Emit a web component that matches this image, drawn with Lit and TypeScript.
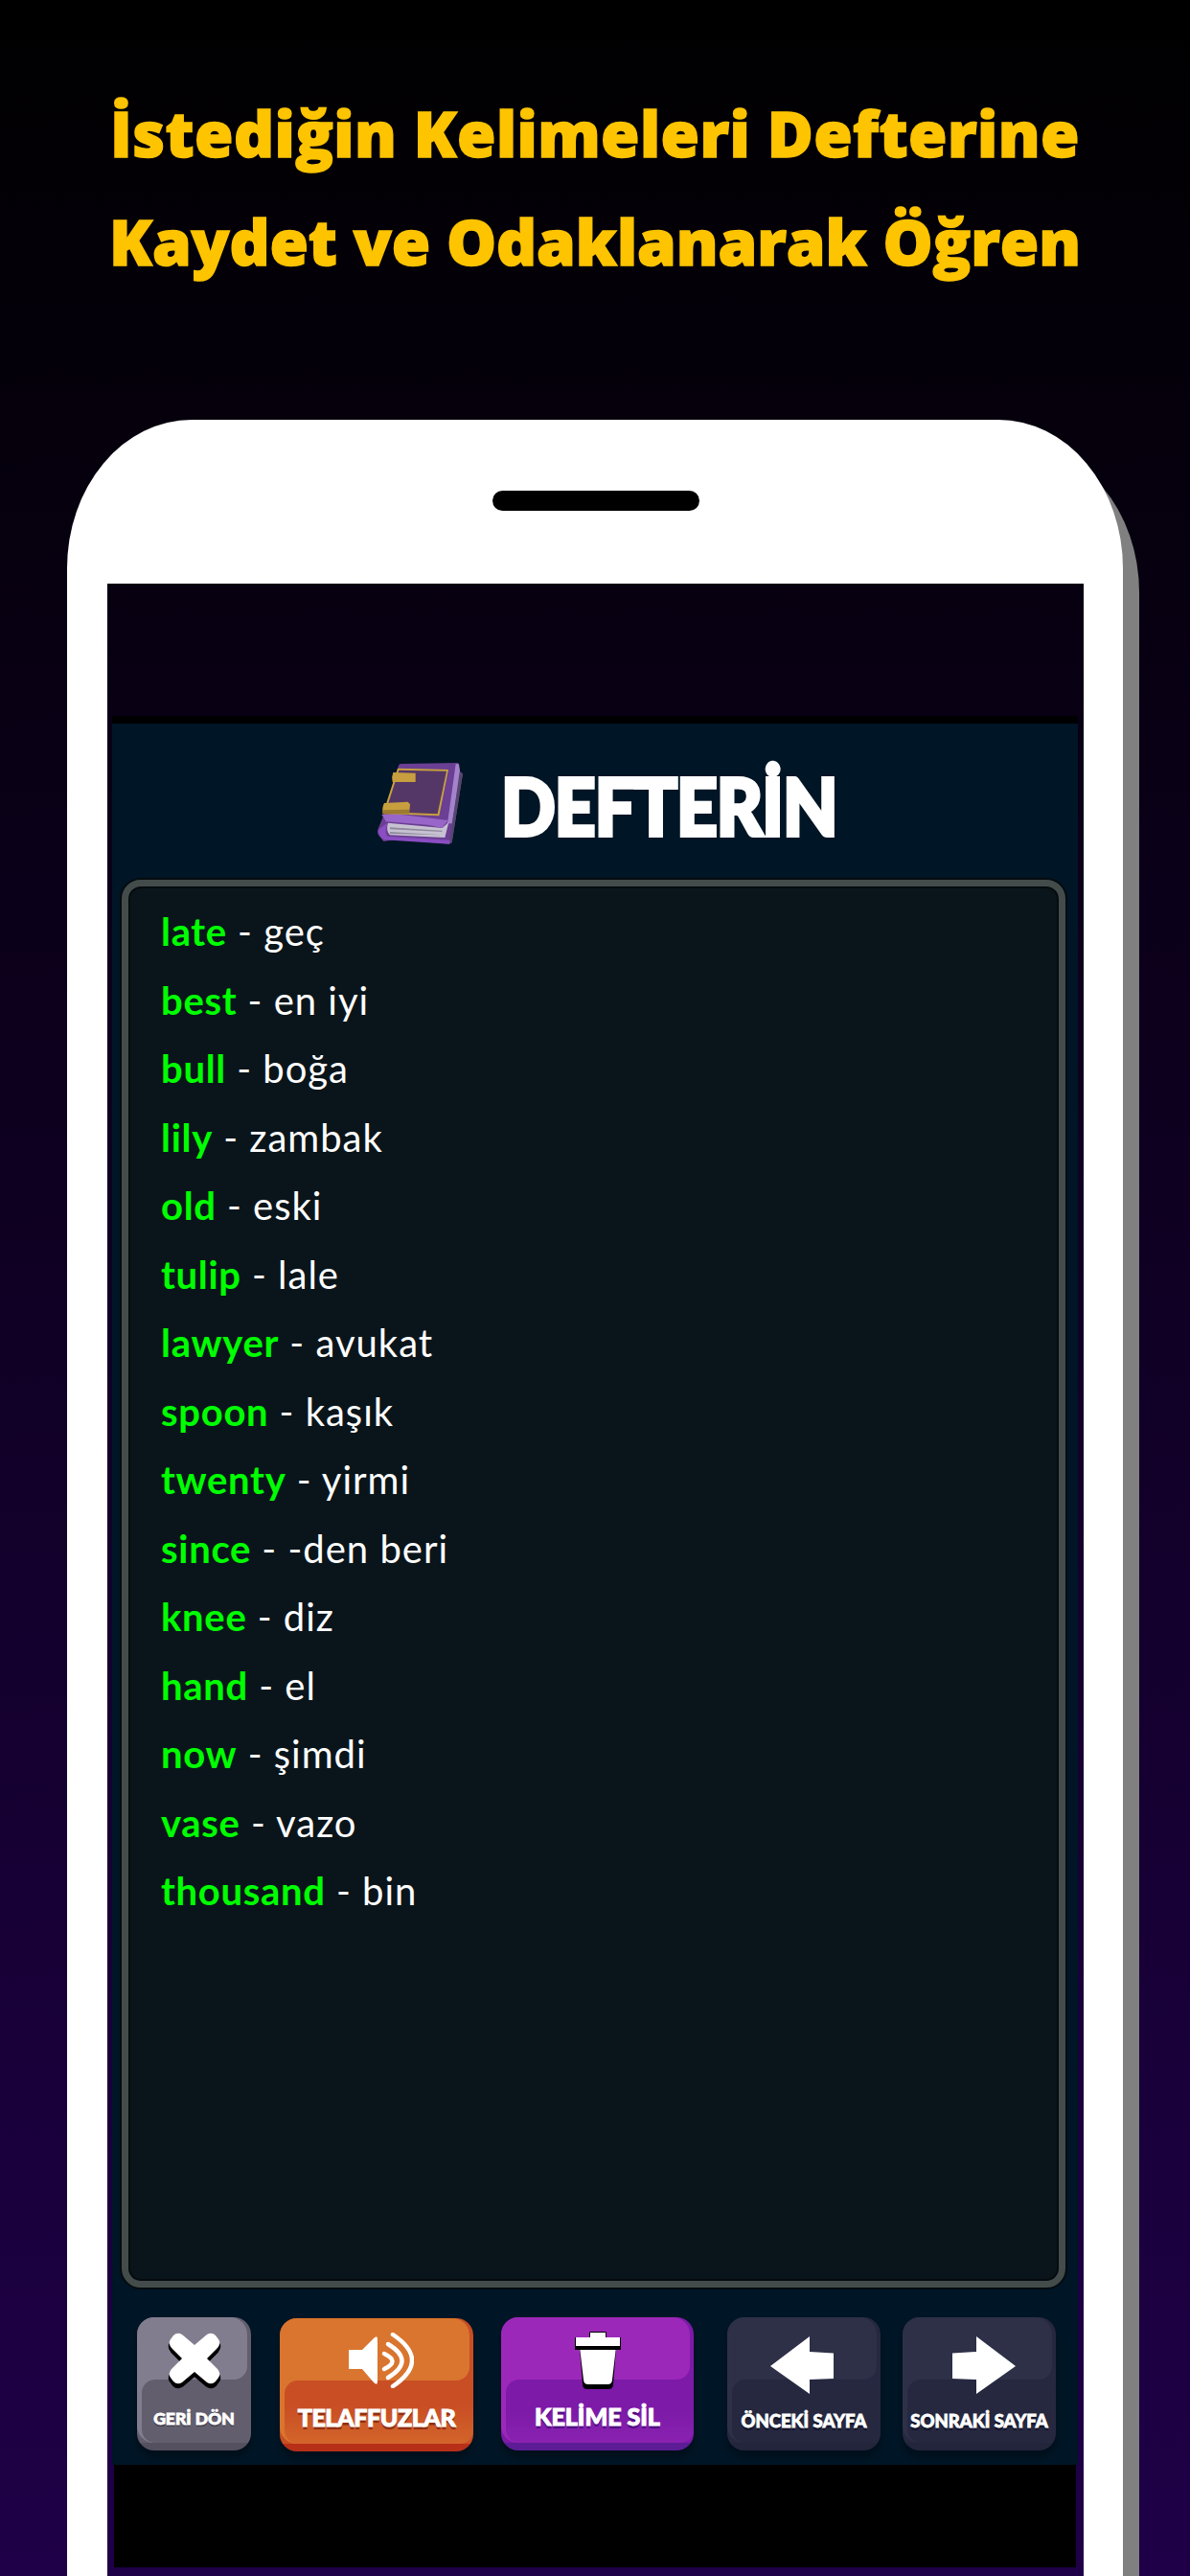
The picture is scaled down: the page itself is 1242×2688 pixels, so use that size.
import { LitElement, html, css, svg } from "lit";
import { customElement } from "lit/decorators.js";

const WORDS: [string, string][] = [
  ["late", "geç"], ["best", "en iyi"], ["bull", "boğa"], ["lily", "zambak"], ["old", "eski"],
  ["tulip", "lale"], ["lawyer", "avukat"], ["spoon", "kaşık"], ["twenty", "yirmi"], ["since", "-den beri"],
  ["knee", "diz"], ["hand", "el"], ["now", "şimdi"], ["vase", "vazo"], ["thousand", "bin"],
];

const bookIcon = svg`<svg class="book" viewBox="0 0 270 255" width="90" height="85">
  <path d="M70 6 Q72 3 80 3 L256 0 L260 28 L270 34 L236 250 L228 254 L60 240 L22 246 L6 226 Q0 215 6 204 L20 170 Z" fill="#6b3f93"/>
  <path d="M248 4 L258 4 L262 32 L236 190 L222 190 Z" fill="#a583cc"/>
  <path d="M260 28 L270 34 L236 250 L228 250 L240 170 Z" fill="#56466e"/>
  <path d="M36 188 L206 204 L226 186 L214 234 L42 226 Q28 210 36 188 Z" fill="#c7c2d2"/>
  <path d="M42 202 L205 212 L205 216 L42 208 Z M42 216 L206 226 L42 222 Z" fill="#8f8a9d"/>
  <path d="M30 184 L160 194 L205 204 L224 180 L60 160 L16 162 Z" fill="#9866c8"/>
  <path d="M8 208 Q0 226 24 241 L228 254 L230 242 L34 230 Q24 220 34 188 Z" fill="#8a4dc2"/>
  <path d="M66 17 L225 21 L196 166 L20 159 Z" fill="#c9a33e"/>
  <path d="M70 23 L219 26 L191 160 L28 154 Z" fill="#553767"/>
  <path d="M52 30 L122 32 L122 60 L50 60 Q46 44 52 30 Z" fill="#c79f3e"/>
  <path d="M24 126 L98 122 L105 130 L102 160 L20 160 Q16 140 24 126 Z" fill="#c79f3e"/>
  <path d="M22 148 L102 146 L102 160 L18 160 Z" fill="#9c7a2e"/>
</svg>`;

const crossIcon = svg`<svg viewBox="0 0 56 60" width="56" height="60">
  <path d="M15 3 L28 14 L41 3 Q46 0 50 4 L53 8 Q56 12 52 17 L41 28 L52 39 Q56 44 53 48 L50 52 Q46 56 41 53 L28 42 L15 53 Q10 56 6 52 L3 48 Q0 44 4 39 L15 28 L4 17 Q0 12 3 8 L6 4 Q10 0 15 3 Z" transform="translate(0 4)" fill="#000" stroke="#000" stroke-width="2"/>
  <path d="M15 3 L28 14 L41 3 Q46 0 50 4 L53 8 Q56 12 52 17 L41 28 L52 39 Q56 44 53 48 L50 52 Q46 56 41 53 L28 42 L15 53 Q10 56 6 52 L3 48 Q0 44 4 39 L15 28 L4 17 Q0 12 3 8 L6 4 Q10 0 15 3 Z" fill="#fff"/>
</svg>`;

const speakerIcon = svg`<svg viewBox="0 0 68 58" width="68" height="58">
  <path d="M0 18 L14 18 L26 6 Q30 2 30 7 L30 51 Q30 56 26 52 L14 38 L0 38 Z" fill="#fff"/>
  <g fill="none" stroke="#fff" stroke-width="4.5" stroke-linecap="round">
    <path d="M37 22 Q54 30 37 38"/>
    <path d="M41 12 Q70 29.5 41 47"/>
    <path d="M46 2 Q86 29 46 56"/>
  </g>
</svg>`;

const trashIcon = svg`<svg viewBox="0 0 48 60" width="48" height="60">
  <path d="M5 18 L43 18 L40 55 Q40 60 35 60 L13 60 Q8 60 8 55 Z" fill="#000"/>
  <path d="M5 16 L43 16 L39 50 Q39 55 34 55 L14 55 Q9 55 9 50 Z" fill="#fff"/>
  <path d="M0 6 L15 6 L15 1 Q15 0 17 0 L31 0 Q33 0 33 1 L33 6 L48 6 L48 19 L0 19 Z" fill="#000"/>
  <path d="M1 6 L16 6 L16 1 L32 1 L32 6 L47 6 L47 15 L1 15 Z" fill="#fff"/>
</svg>`;

const arrowIcon = (right: boolean) => svg`<svg viewBox="0 0 66 60" width="66" height="60">
  <path d="${right ? "M0 17.5 L25 16 L25 0 L66 31 L25 60 L25 45 L0 44 Z" : "M66 17.5 L41 16 L41 0 L0 31 L41 60 L41 45 L66 44 Z"}" fill="#fff"/>
</svg>`;

@customElement("app-root")
export class AppRoot extends LitElement {
  static styles = css`
    :host {
      display: flex;
      flex-direction: column;
      width: 1242px;
      height: 2688px;
      overflow: hidden;
      background: linear-gradient(180deg, #000 0%, #1f0048 100%);
      font-family: "Lato", "Noto Sans", sans-serif;
    }
    .headline {
      height: 438px;
      flex: none;
      box-sizing: border-box;
      padding-top: 82px;
      text-align: center;
      color: #ffc400;
      font-family: "Open Sans", "Noto Sans", sans-serif;
      font-weight: 800;
      font-size: 65.5px;
      line-height: 113px;
      letter-spacing: 0.4px;
      -webkit-text-stroke: 1.5px #ffc400;
    }
    .headline div { white-space: nowrap; }
    .headline .second { letter-spacing: -0.1px; }
    .phone {
      flex: 1;
      margin-left: 70px;
      width: 1102px;
      box-sizing: border-box;
      padding: 0 41px 0 42px;
      background: #fff;
      border-radius: 130px 130px 0 0 / 155px 155px 0 0;
      box-shadow: 17px 25px 0 #808080;
      display: flex;
      flex-direction: column;
      min-height: 0;
    }
    .notch-area {
      height: 171px;
      flex: none;
      display: flex;
      justify-content: center;
      padding-top: 74px;
      box-sizing: border-box;
    }
    .notch {
      width: 216px;
      height: 21px;
      border-radius: 11px;
      background: #000;
    }
    .screen {
      flex: 1;
      display: flex;
      flex-direction: column;
      background: linear-gradient(180deg, #000 0%, #1f0048 100%) 0 -609px / 100% 2688px no-repeat;
      padding: 138px 6px 9px 5px;
      min-height: 0;
    }
    .panel {
      height: 1825px;
      flex: none;
      box-sizing: border-box;
      background: #001525;
      border-top: 8px solid #000;
      display: flex;
      flex-direction: column;
    }
    .title {
      height: 163px;
      flex: none;
      display: flex;
      align-items: center;
      box-sizing: border-box;
      padding-left: 276px;
      gap: 40px;
    }
    .book { flex: none; margin-top: 4px; }
    .title-text {
      color: #fff;
      font-family: "Lato", sans-serif;
      font-weight: 900;
      font-size: 81px;
      line-height: 1;
      letter-spacing: -1px;
      -webkit-text-stroke: 4px #fff;
      transform: translateY(4px) scaleX(0.92);
      transform-origin: left center;
    }
    .box {
      height: 1469px;
      flex: none;
      margin: 0 13px 0 10px;
      box-sizing: border-box;
      background: #0a151b;
      border: 7px solid #434c4a;
      border-radius: 20px;
      box-shadow: 0 0 0 2px #050b0f, inset 0 0 0 2px #050b0f;
      padding: 12px 0 0 34px;
      overflow: hidden;
    }
    .row {
      height: 71.5px;
      line-height: 71.5px;
      font-size: 40px;
      color: #fff;
      font-family: "Lato", sans-serif;
      white-space: nowrap;
      letter-spacing: 1px;
    }
    .row b {
      color: #00ff00;
      font-weight: 700;
      letter-spacing: 0.7px;
    }
    .buttons {
      flex: 1;
      display: flex;
      padding: 31px 0 0 26px;
      align-items: flex-start;
    }
    .btn {
      position: relative;
      height: 139px;
      flex: none;
      box-sizing: border-box;
      border-radius: 18px;
      background: linear-gradient(var(--base) 131px, var(--edge) 0);
      box-shadow: 0 7px 4px rgba(0, 0, 0, 0.25);
    }
    .btn .top {
      position: absolute;
      left: 0; right: 4px; top: 0;
      height: 65px;
      border-radius: 18px 18px 14px 0;
      background: var(--top);
    }
    .btn .side {
      position: absolute;
      left: 0; width: 18px; top: 40px; bottom: 8px;
      border-radius: 0 0 0 18px;
      background: var(--top);
    }
    .btn .low {
      position: absolute;
      left: 5px; right: 0; top: 65px; bottom: 8px;
      border-radius: 14px;
      background: var(--low);
    }
    .btn .icon {
      position: absolute;
      left: 0; right: 0; top: 15px;
      display: flex;
      justify-content: center;
    }
    .btn .label {
      position: absolute;
      left: 0; right: 0;
      text-align: center;
      color: #fff;
      font-family: "Lato", sans-serif;
      font-weight: 900;
      white-space: nowrap;
      line-height: 1;
      -webkit-text-stroke: 0.8px #fff;
    }
    .back { width: 119px; --top: #827d8e; --low: #625e6e; --base: #625e6e; --edge: #54505f; }
    .back .label { top: 97px; font-size: 17.5px; text-shadow: 0 2px 0 #3f3c49; }
    .speak { width: 202px; margin-left: 30px; margin-top: 1px; --top: #d9752e; --low: linear-gradient(#c94e24 40%, #d2652a); --base: #c94e24; --edge: #b82f18; }
    .speak .icon { padding-left: 9px; }
    .speak .label { top: 91px; font-size: 25px; letter-spacing: -0.4px; -webkit-text-stroke: 1px #fff; text-shadow: 0 3px 0 #8f2f12; }
    .del { width: 201px; margin-left: 29px; --top: #9c28b9; --low: linear-gradient(#7d1aa8 50%, #8a22b0); --base: #7d1aa8; --edge: #5c1c96; }
    .del .label { top: 91px; font-size: 25px; -webkit-text-stroke: 1px #fff; text-shadow: 0 3px 0 #4f1182; }
    .prev { width: 160px; margin-left: 35px; --top: #2e3048; --low: #262840; --base: #262840; --edge: #23253c; }
    .prev .icon { top: 20px; padding-right: 4px; }
    .prev .label { top: 99px; font-size: 18.5px; text-shadow: 0 3px 0 #14152a; }
    .next { width: 160px; margin-left: 23px; --top: #2e3048; --low: #262840; --base: #262840; --edge: #23253c; }
    .next .icon { top: 20px; padding-left: 10px; }
    .next .label { top: 99px; font-size: 18.5px; text-shadow: 0 3px 0 #14152a; }
    .ad {
      height: 107px;
      flex: none;
      margin: 0 2px;
      background: #000;
    }
  `;

  private button(cls: string, label: string, icon: unknown) {
    return html`<div class="btn ${cls}">
      <div class="top"></div>
      <div class="side"></div>
      <div class="low"></div>
      <div class="icon">${icon}</div>
      <div class="label">${label}</div>
    </div>`;
  }

  render() {
    return html`
      <div class="headline">
        <div>İstediğin Kelimeleri Defterine</div>
        <div class="second">Kaydet ve Odaklanarak Öğren</div>
      </div>
      <div class="phone">
        <div class="notch-area"><div class="notch"></div></div>
        <div class="screen">
          <div class="panel">
            <div class="title">
              ${bookIcon}
              <div class="title-text">DEFTERİN</div>
            </div>
            <div class="box">
              ${WORDS.map(([en, tr]) => html`<div class="row"><b>${en}</b> - ${tr}</div>`)}
            </div>
            <div class="buttons">
              ${this.button("back", "GERİ DÖN", crossIcon)}
              ${this.button("speak", "TELAFFUZLAR", speakerIcon)}
              ${this.button("del", "KELİME SİL", trashIcon)}
              ${this.button("prev", "ÖNCEKİ SAYFA", arrowIcon(false))}
              ${this.button("next", "SONRAKİ SAYFA", arrowIcon(true))}
            </div>
          </div>
          <div class="ad"></div>
        </div>
      </div>
    `;
  }
}
